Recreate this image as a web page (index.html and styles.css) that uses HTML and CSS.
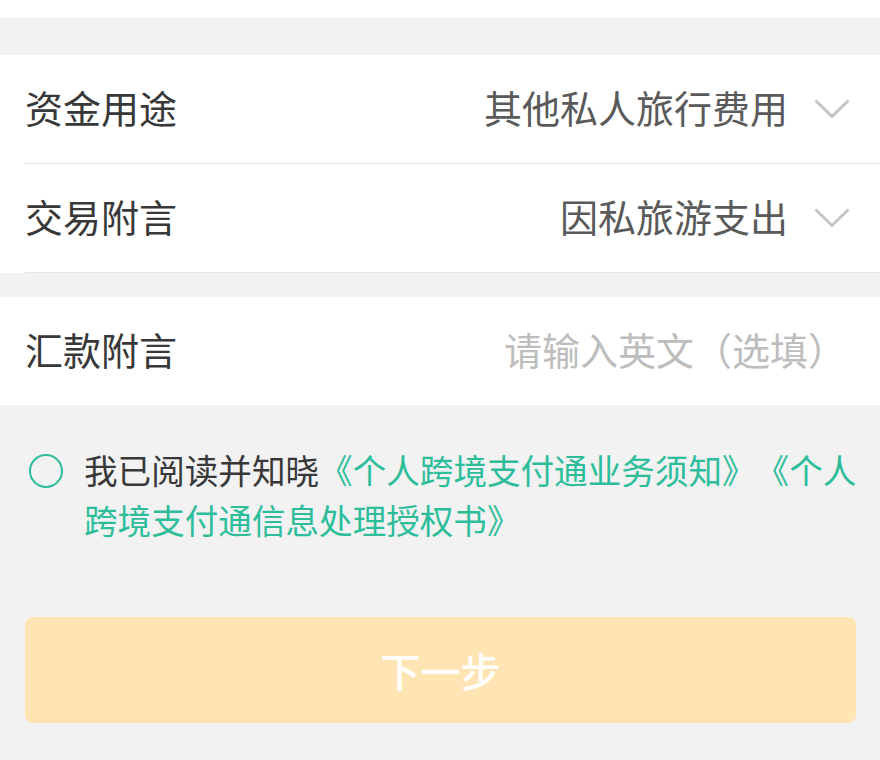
FILE: index.html
```html
<!DOCTYPE html>
<html lang="zh-CN">
<head>
<meta charset="utf-8">
<link rel="stylesheet" href="styles.css">
</head>
<body>
<div class="page">
  <div class="top-card"></div>
  <div class="group first">
    <div class="row">
      <span class="label">资金用途</span>
      <span class="value">其他私人旅行费用</span>
      <svg class="chev" width="36" height="20" viewBox="0 0 36 20"><polyline points="1.5,1.5 18,17.5 34.5,1.5" fill="none" stroke="#c4c4c4" stroke-width="2.9"/></svg>
    </div>
    <div class="row">
      <span class="label">交易附言</span>
      <span class="value">因私旅游支出</span>
      <svg class="chev" width="36" height="20" viewBox="0 0 36 20"><polyline points="1.5,1.5 18,17.5 34.5,1.5" fill="none" stroke="#c4c4c4" stroke-width="2.9"/></svg>
    </div>
  </div>
  <div class="group second">
    <div class="row last">
      <span class="label">汇款附言</span>
      <span class="placeholder">请输入英文（选填）</span>
    </div>
  </div>
  <div class="agree">
    <span class="radio"></span>
    <p class="agree-text">我已阅读并知晓<span class="link">《个人跨境支付通业务须知》《个人跨境支付通信息处理授权书》</span></p>
  </div>
  <div class="btn-wrap">
    <div class="btn">下一步</div>
  </div>
</div>
</body>
</html>
```

FILE: styles.css
```css
* { box-sizing: border-box; }
html, body { margin: 0; padding: 0; }
body {
  background: #f2f2f2;
  font-family: "Noto Sans CJK SC", "Noto Sans", sans-serif;
  width: 880px;
  height: 760px;
  overflow: hidden;
}
.page { width: 880px; }
.top-card { height: 18px; background: #fff; }
.group { background: #fff; }
.group.first { margin-top: 37px; }
.group.second { margin-top: 24px; }
.row {
  display: flex;
  align-items: center;
  height: 109px;
  margin-left: 25px;
  padding-right: 30px;
  border-bottom: 1px solid #e6e6e6;
}
.row.last { border-bottom: none; height: 108px; padding-right: 34px; }
.label, .value, .placeholder {
  font-size: 38px;
  line-height: 1;
  padding-bottom: 4px;
}
.label { color: #383838; flex: 1; }
.value { color: #5a5a5a; }
.placeholder { color: #bdbdbd; text-spacing-trim: space-all; }
.chev { margin-left: 26px; display: block; }
.agree {
  display: flex;
  align-items: flex-start;
  padding: 40px 10px 0 29px;
}
.radio {
  flex: none;
  width: 34px;
  height: 34px;
  border: 2.8px solid #2dbd9b;
  border-radius: 50%;
  margin-top: 9px;
  margin-right: 21px;
}
.agree-text {
  margin: 0;
  font-size: 33.6px;
  line-height: 50px;
  color: #383838;
  text-spacing-trim: space-all;
}
.link { color: #2dbd9b; }
.btn-wrap { padding: 72px 24px 0 25px; }
.btn {
  height: 106px;
  background: #ffe5b3;
  border-radius: 8px;
  color: #fff;
  font-size: 40px;
  font-weight: 500;
  display: flex;
  align-items: center;
  justify-content: center;
}
```
